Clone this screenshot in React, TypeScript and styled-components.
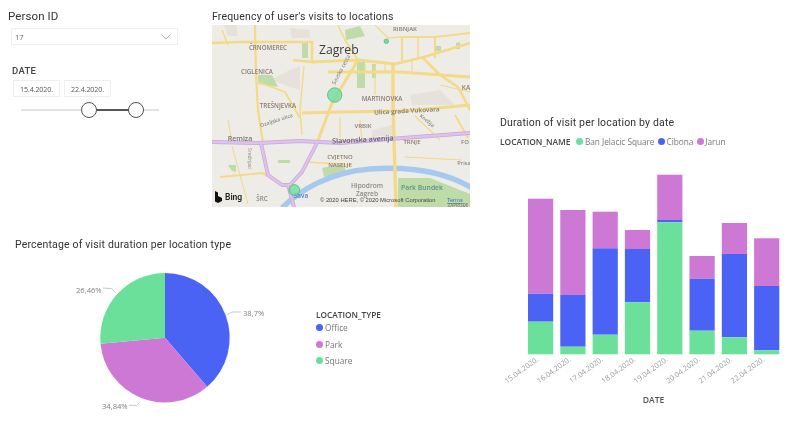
import React from "react";
import styled, { createGlobalStyle } from "styled-components";

const GREEN = "#6BE09A";
const BLUE = "#4A63F5";
const PURPLE = "#CE78D6";
const DIN = `"Roboto", "Liberation Sans", sans-serif`;
const SEGOE = `"Open Sans", "Noto Sans", sans-serif`;

const Global = createGlobalStyle`
  html, body { margin: 0; padding: 0; background: #fff; }
  body { font-family: ${SEGOE}; overflow: hidden; }
`;

const Page = styled.div`
  width: 806px;
  height: 432px;
  display: flex;
  background: #fff;
  filter: blur(0.45px);
  overflow: hidden;
`;
const LeftColumn = styled.div`
  width: 490px;
  display: flex;
  flex-direction: column;
`;
const TopRow = styled.div`
  height: 236px;
  display: flex;
`;
const SlicerPanel = styled.section`
  width: 212px;
  box-sizing: border-box;
  padding: 9px 0 0 8px;
  display: flex;
  flex-direction: column;
`;
const SlicerTitle = styled.div`
  font: 400 11.5px/15px ${DIN};
  letter-spacing: 0.1px;
  color: #333;
`;
const Dropdown = styled.div`
  width: 167px;
  height: 17px;
  box-sizing: border-box;
  margin: 4px 0 0 3px;
  padding: 0 6px 0 3px;
  border: 1px solid #eee;
  display: flex;
  align-items: center;
  justify-content: space-between;
  font-size: 7.6px;
  color: #666;
`;
const DateLabel = styled.div`
  margin: 20px 0 0 4px;
  font: 500 9.5px/12px ${DIN};
  letter-spacing: 0.3px;
  color: #444;
`;
const DateRow = styled.div`
  display: flex;
  gap: 4px;
  margin: 3px 0 0 5px;
`;
const DateBox = styled.div`
  width: 47px;
  height: 17px;
  box-sizing: border-box;
  border: 1px solid #eee;
  display: flex;
  align-items: center;
  justify-content: center;
  font-size: 7.1px;
  letter-spacing: -0.1px;
  color: #555;
`;
const SliderTrack = styled.div`
  position: relative;
  width: 138px;
  height: 2px;
  margin: 12px 0 0 13px;
  background: #e4e4e4;
`;
const SliderFill = styled.div`
  position: absolute;
  left: 68px;
  width: 47px;
  top: 0;
  height: 2px;
  background: #555;
`;
const SliderHandle = styled.div<{ $left: number }>`
  position: absolute;
  left: ${(p) => p.$left}px;
  top: -7px;
  width: 16px;
  height: 16px;
  box-sizing: border-box;
  border: 1.5px solid #505050;
  border-radius: 50%;
  background: #fff;
`;
const MapPanel = styled.section`
  width: 258px;
  padding-top: 10px;
  display: flex;
  flex-direction: column;
`;
const VisualTitle = styled.div`
  font: 400 10.5px/14px ${DIN};
  letter-spacing: 0.17px;
  color: #333;
  white-space: nowrap;
`;
const MapFrame = styled.svg`
  display: block;
  width: 258px;
  height: 182px;
  margin-top: 1px;
`;
const PiePanel = styled.section`
  padding: 2px 0 0 15px;
  display: flex;
  flex-direction: column;
`;
const PieRow = styled.div`
  display: flex;
  margin: 0 0 0 45px;
`;
const PieSvg = styled.svg`
  display: block;
  width: 250px;
  height: 170px;
  flex: none;
`;
const TypeLegend = styled.div`
  margin: 56.5px 0 0 6px;
  display: flex;
  flex-direction: column;
`;
const LegendTitle = styled.div`
  font: 600 8.3px/11px ${SEGOE};
  color: #444;
  white-space: nowrap;
`;
const TypeItem = styled.div`
  display: flex;
  align-items: center;
  gap: 2px;
  height: 16.4px;
  font-size: 8.3px;
  color: #777;
`;
const Dot = styled.span<{ $color: string }>`
  width: 7px;
  height: 7px;
  border-radius: 50%;
  background: ${(p) => p.$color};
  flex: none;
`;
const RightColumn = styled.section`
  flex: 1;
  padding: 116px 0 0 10px;
  display: flex;
  flex-direction: column;
`;
const ColumnLegend = styled.div`
  display: flex;
  align-items: center;
  margin-top: 4px;
  height: 14px;
  font-size: 8.3px;
  color: #777;
`;
const ColumnLegendTitle = styled.span`
  font: 600 8.4px/13px ${SEGOE};
  color: #444;
  margin-right: 6px;
`;
const ColumnItem = styled.span`
  display: flex;
  align-items: center;
  gap: 1.5px;
  margin-right: 3.5px;
  letter-spacing: -0.05px;
  white-space: nowrap;
`;
const BarSvg = styled.svg`
  display: block;
  width: 296px;
  height: 260px;
  margin-top: 10px;
`;

const ROADS: [string, number][] = [
  ["M212 43 L240 42 L312 42 L312 62 L293 60", 2.6],
  ["M222 30 L228 45", 1.5],
  ["M312 62 L358 60 L395 64 L424 57 L470 43", 2.8],
  ["M328 72 L400 72 L470 77", 3],
  ["M255 25 L256 75 L258 110 L263 143", 2.2],
  ["M258 82 L285 92 L300 118", 1.8],
  ["M304 66 L300 110 L302 135", 1.4],
  ["M358 60 L332 103 L317 143", 3],
  ["M302 113 L340 112 L400 111 L438 108 L470 105", 3],
  ["M393 64 L393 105 L396 207", 3.4],
  ["M422 57 L440 75 L458 87 L470 110", 2.6],
  ["M402 37 L435 37 L435 58", 2],
  ["M402 37 L402 64", 2],
  ["M418 37 L418 60", 1.5],
  ["M435 37 L470 33", 1.8],
  ["M375 25 L388 38 L402 37", 1.4],
  ["M220 177 L262 173 L268 176", 2],
  ["M338 25 L345 40 L358 60", 1.6],
  ["M360 120 L362 142", 1.2],
  ["M340 118 L340 138", 1.2],
  ["M308 162 L352 165", 1.5],
  ["M405 157 L462 160", 1],
  ["M415 116 L440 140", 1.2],
  ["M455 115 L468 138", 2],
  ["M228 120 L232 142", 1],
  ["M232 146 L248 204", 1],
  ["M365 64 L365 72 M375 64 L375 72 M385 64 L385 72 M412 60 L412 72 M375 72 L375 95", 1.1],
  ["M440 85 L470 92", 1.1],
];
const MOTORWAY = "M212 142 L258 143 L300 141 L340 143 L390 139 L470 133";
const BRANCH = "M261 143 L268 175 L282 185 L290 185 L302 172 L317 143 M288 185 L294 207";

const MAP_LABELS: [string, number, number, number, string, number][] = [
  ["ČRNOMEREC", 268, 49.5, 6.2, "#8a7c72", 0],
  ["RIBNJAK", 405, 31, 6, "#8a7c72", 0],
  ["CIGLENICA", 257, 73.5, 6.2, "#8a7c72", 0],
  ["TREŠNJEVKA", 278, 107.5, 6.2, "#8a7c72", 0],
  ["MARTINOVKA", 382, 101, 6.2, "#8a7c72", 0],
  ["KA", 466, 90, 6.4, "#8a7c72", 0],
  ["Ulica grada Vukovara", 407, 113, 6.4, "#7a7a70", -3],
  ["VRBIK", 363, 128, 6, "#8a7c72", 0],
  ["TRNJE", 412, 144, 6, "#8a7c72", 0],
  ["FO", 465, 144, 6, "#8a7c72", 0],
  ["Remiza", 240, 141, 7, "#777", 0],
  ["Slavonska avenija", 363, 142, 7.2, "#666", -3],
  ["CVJETNO", 340, 159, 6, "#8a7c72", 0],
  ["NASELJE", 340, 166.5, 6, "#8a7c72", 0],
  ["Hipodrom", 367, 188, 6.6, "#8a8a8a", 0],
  ["Zagreb", 367, 196, 6.6, "#8a8a8a", 0],
  ["Park Bundek", 422, 190, 6.8, "#5f8f90", 0],
  ["Sava", 301, 198, 6.4, "#4f7fc0", 0],
  ["ŠRC", 262, 201, 6.2, "#888", 0],
  ["Prisa", 464, 165, 5.6, "#888", 0],
  ["ZAPRUĐE", 458, 206.8, 4.6, "#8a7c72", 0],
  ["Ozaljska ulica", 277, 122, 5.2, "#888", -18],
  ["Knežija", 426, 122, 5, "#888", 40],
];

const MapView = () => (
  <MapFrame viewBox="212 25 258 182" role="img">
    <rect x="212" y="25" width="258" height="182" fill="#eeece7" />
    <path d="M224 25 L236 25 L238 36 L228 36 Z M290 70 L300 66 L300 90 L270 80 Z M372 130 L392 125 L392 135 L372 137 Z M410 95 L440 90 L455 105 L412 105 Z M290 28 L310 30 L310 38 L292 38 Z" fill="#e6e1da" />
    <path d="M302 43 L308 43 L308 58 L302 58 Z M357 62 L365 62 L365 88 L357 88 Z M372 64 L376 64 L376 78 L372 78 Z M345 30 L360 26 L365 36 L346 40 Z M258 75 L272 75 L278 87 L258 84 Z M398 178 L430 178 L470 194 L470 207 L398 207 Z M322 168 L345 163 L345 172 L324 177 Z M436 46 L441 46 L441 51 L436 51 Z M456 43 L460 42 L460 49 L456 49 Z M228 165 L236 165 L236 172 L232 171 Z M278 160 L290 160 L290 163 L278 163 Z" fill="#bfdca8" />
    <path d="M282 208 C300 190 330 172 370 169 C410 166 445 172 472 188" fill="none" stroke="#a6c9ef" strokeWidth="5.4" />
    {ROADS.map(([d, w], i) => (
      <path key={i} d={d} fill="none" stroke="#f4d987" strokeWidth={w} strokeLinejoin="round" />
    ))}
    <path d={MOTORWAY + " " + BRANCH} fill="none" stroke="#c4a8dc" strokeWidth="3.8" strokeLinejoin="round" />
    <path d={MOTORWAY + " " + BRANCH} fill="none" stroke="#dec2ec" strokeWidth="2.4" strokeLinejoin="round" />
    {MAP_LABELS.map(([t, x, y, s, c, r]) => (
      <text key={t} x={x} y={y} fontSize={s} fill={c} textAnchor="middle" fontFamily={SEGOE} fontWeight={600}
        transform={r ? `rotate(${r} ${x} ${y})` : undefined}>{t}</text>
    ))}
    <text x="319" y="54" fontSize="12.2" fill="#3c3c3c" fontFamily={SEGOE}>Zagreb</text>
    <text transform="rotate(-62 335 85)" x="335" y="85" fontSize="5.6" fill="#777" fontFamily={SEGOE}>Savska cesta</text>
    <text transform="rotate(90 248 148)" x="248" y="148" fontSize="5" fill="#888" fontFamily={SEGOE}>Srednjaci</text>
    <circle cx="334.700" cy="95" r="7.200" fill={GREEN} fillOpacity="0.8" stroke="#55b57e" strokeWidth="0.8" />
    <circle cx="386.300" cy="41.300" r="2.300" fill={GREEN} stroke="#4fb47a" strokeWidth="0.6" />
    <circle cx="294.300" cy="190" r="5.400" fill={GREEN} fillOpacity="0.8" stroke="#55b57e" strokeWidth="0.8" />
    <path d="M215 191 L218 192.500 L218 196 L222 198 L222 201 L218 203 L215 201.500 Z" fill="#111" />
    <text x="225" y="200" fontSize="8.5" fontWeight="600" fill="#222" fontFamily={DIN}>Bing</text>
    <text x="320" y="202" fontSize="5.8" fill="#444" fontFamily={`"Liberation Sans", sans-serif`}>© 2020 HERE, © 2020 Microsoft Corporation</text>
    <text x="447" y="202" fontSize="5.8" fill="#3a6fc0" textDecoration="underline" fontFamily={`"Liberation Sans", sans-serif`}>Terms</text>
  </MapFrame>
);

const polar = (pct: number, r = 64.7) => {
  const a = (pct / 100) * 2 * Math.PI;
  return [165 + r * Math.sin(a), 337.7 - r * Math.cos(a)];
};
const slice = (from: number, to: number) => {
  const [x1, y1] = polar(from);
  const [x2, y2] = polar(to);
  return `M165 337.7 L${x1} ${y1} A64.7 64.7 0 0 1 ${x2} ${y2} Z`;
};

const PieChart = () => (
  <PieSvg viewBox="60 252 250 170" role="img">
    <path d={slice(0, 38.7)} fill={BLUE} />
    <path d={slice(38.7, 73.54)} fill={PURPLE} />
    <path d={slice(73.54, 100)} fill={GREEN} />
    <g fill="none" stroke="#bbb" strokeWidth="0.8">
      <path d="M227 315 L232 312 L241 312" />
      <path d="M103 288 L111.700 288.700 L115.700 292.700" />
      <path d="M129 405.300 L137 405.300 L140 401.700" />
    </g>
    <g fontSize="7.6" fill="#808080" fontFamily={SEGOE}>
      <text x="243" y="316">38,7%</text>
      <text x="76" y="293">26,46%</text>
      <text x="102" y="409">34,84%</text>
    </g>
  </PieSvg>
);

const BARS = [
  { x: 528, top: 198.7, p: 293.7, b: 321.7, date: "15.04.2020." },
  { x: 560.3, top: 210, p: 295, b: 346.7, date: "16.04.2020." },
  { x: 592.6, top: 211.7, p: 248.3, b: 334.7, date: "17.04.2020." },
  { x: 624.9, top: 230, p: 249, b: 302.3, date: "18.04.2020." },
  { x: 657.2, top: 174.7, p: 220, b: 222.3, date: "19.04.2020." },
  { x: 689.5, top: 256, p: 278.7, b: 330.7, date: "20.04.2020." },
  { x: 721.8, top: 223, p: 254, b: 337.3, date: "21.04.2020." },
  { x: 754.1, top: 238.3, p: 286, b: 350.3, date: "22.04.2020." },
];
const BASE = 354.3;
const BAR_W = 25.2;

const ColumnChart = () => (
  <BarSvg viewBox="500 158 296 260" role="img">
    {BARS.map((b) => (
      <g key={b.date}>
        <rect x={b.x} y={b.top} width={BAR_W} height={b.p - b.top} fill={PURPLE} />
        <rect x={b.x} y={b.p} width={BAR_W} height={b.b - b.p} fill={BLUE} />
        <rect x={b.x} y={b.b} width={BAR_W} height={BASE - b.b} fill={GREEN} />
        <text x={b.x + 11} y={360.5} fontSize="7.4" fill="#999" textAnchor="end" fontFamily={SEGOE}
          transform={`rotate(-36 ${b.x + 11} 360.5)`}>{b.date}</text>
      </g>
    ))}
    <text x="653.500" y="403" fontSize="8.6" fontWeight="600" fill="#555" textAnchor="middle" fontFamily={SEGOE}>DATE</text>
  </BarSvg>
);

export default function App() {
  return (
    <>
      <Global />
      <Page>
        <LeftColumn>
          <TopRow>
            <SlicerPanel>
              <SlicerTitle>Person ID</SlicerTitle>
              <Dropdown>
                <span>17</span>
                <svg width="10" height="6" viewBox="0 0 10 6">
                  <path d="M0.500 0.500 L5 5 L9.500 0.500" fill="none" stroke="#999" strokeWidth="0.8" />
                </svg>
              </Dropdown>
              <DateLabel>DATE</DateLabel>
              <DateRow>
                <DateBox>15.4.2020.</DateBox>
                <DateBox>22.4.2020.</DateBox>
              </DateRow>
              <SliderTrack>
                <SliderFill />
                <SliderHandle $left={60} />
                <SliderHandle $left={107} />
              </SliderTrack>
            </SlicerPanel>
            <MapPanel>
              <VisualTitle>Frequency of user's visits to locations</VisualTitle>
              <MapView />
            </MapPanel>
          </TopRow>
          <PiePanel>
            <VisualTitle>Percentage of visit duration per location type</VisualTitle>
            <PieRow>
              <PieChart />
              <TypeLegend>
                <LegendTitle>LOCATION_TYPE</LegendTitle>
                <TypeItem><Dot $color={BLUE} />Office</TypeItem>
                <TypeItem><Dot $color={PURPLE} />Park</TypeItem>
                <TypeItem><Dot $color={GREEN} />Square</TypeItem>
              </TypeLegend>
            </PieRow>
          </PiePanel>
        </LeftColumn>
        <RightColumn>
          <VisualTitle>Duration of visit per location by date</VisualTitle>
          <ColumnLegend>
            <ColumnLegendTitle>LOCATION_NAME</ColumnLegendTitle>
            <ColumnItem><Dot $color={GREEN} />Ban Jelacic Square</ColumnItem>
            <ColumnItem><Dot $color={BLUE} />Cibona</ColumnItem>
            <ColumnItem><Dot $color={PURPLE} />Jarun</ColumnItem>
          </ColumnLegend>
          <ColumnChart />
        </RightColumn>
      </Page>
    </>
  );
}
